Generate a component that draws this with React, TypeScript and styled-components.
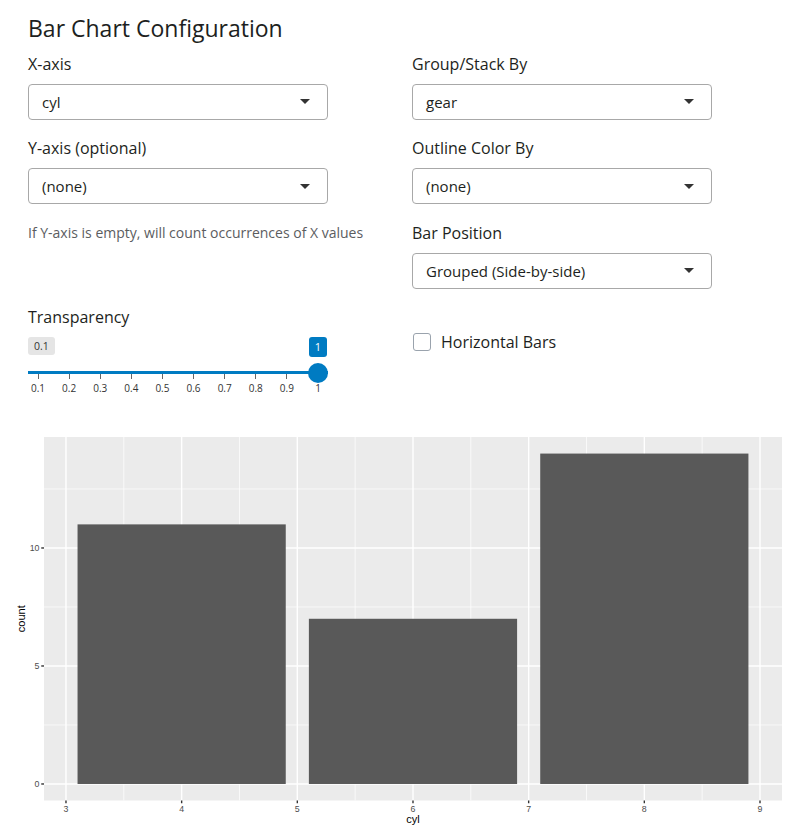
import React from "react";
import styled, { createGlobalStyle } from "styled-components";

const GlobalStyle = createGlobalStyle`
  html, body {
    margin: 0;
    padding: 0;
    background: #ffffff;
    overflow: hidden;
  }
  body {
    font-family: "Open Sans", "DejaVu Sans", sans-serif;
    color: #1d1f21;
  }
  * { box-sizing: border-box; }
`;

const Page = styled.div`
  width: 800px;
  display: flex;
  flex-direction: column;
`;

const ConfigSection = styled.section`
  padding: 15px 28px 0;
`;

const Title = styled.h3`
  margin: 0 0 9px;
  font-size: 23px;
  font-weight: 400;
  line-height: 1.2;
  color: #1d1f21;
`;

const ConfigGrid = styled.div`
  display: grid;
  grid-template-columns: 360px 360px;
  column-gap: 24px;
`;

const Column = styled.div`
  display: flex;
  flex-direction: column;
`;

const FormGroup = styled.div<{ $padTop?: number }>`
  display: flex;
  flex-direction: column;
  margin-bottom: 16.5px;
  padding-top: ${(p) => p.$padTop ?? 0}px;
`;

const Label = styled.label`
  font-size: 16px;
  line-height: 24px;
  margin-bottom: 8px;
  color: #1d1f21;
`;

const SelectBox = styled.div`
  width: 300px;
  height: 36px;
  display: flex;
  align-items: center;
  justify-content: space-between;
  padding: 0 17px 0 13px;
  border: 1px solid #a8a8a8;
  border-radius: 4px;
  background: #ffffff;
  font-size: 15px;
  color: #1d1f21;
`;

const Caret = styled.span`
  width: 0;
  height: 0;
  border-top: 5px solid #333333;
  border-left: 5px solid transparent;
  border-right: 5px solid transparent;
`;

const HelpText = styled.div`
  margin-top: 1.5px;
  font-size: 14px;
  line-height: 21px;
  color: #5b5d5f;
`;

const SliderBox = styled.div`
  width: 300px;
  display: flex;
  flex-direction: column;
`;

const SliderLabels = styled.div`
  height: 24px;
  display: flex;
  align-items: flex-start;
  justify-content: space-between;
  padding-right: 1px;
`;

const MinPill = styled.span`
  height: 18px;
  padding: 0 6px;
  border-radius: 3px;
  background: #e5e5e5;
  color: #333333;
  font-size: 10.5px;
  line-height: 18px;
`;

const ValueBadge = styled.span`
  width: 18px;
  height: 20px;
  border-radius: 3px;
  background: #007bc2;
  color: #ffffff;
  font-size: 11px;
  line-height: 20px;
  text-align: center;
`;

const Track = styled.div`
  position: relative;
  margin-top: 10px;
  height: 3px;
  background: #007bc2;
`;

const Thumb = styled.span`
  position: absolute;
  right: 0;
  top: -8.5px;
  width: 20px;
  height: 20px;
  border-radius: 50%;
  background: #007bc2;
`;

const Scale = styled.div`
  display: grid;
  grid-template-columns: repeat(10, 31.11px);
  margin-left: -5.56px;
`;

const TickCol = styled.div`
  display: flex;
  flex-direction: column;
  align-items: center;
`;

const TickMark = styled.span`
  width: 1px;
  height: 5px;
  background: #666666;
`;

const TickLabel = styled.span`
  margin-top: 3px;
  font-size: 10px;
  line-height: 12px;
  color: #333333;
`;

const CheckRow = styled.label`
  display: flex;
  align-items: center;
  gap: 10px;
  height: 24px;
  padding-left: 1px;
  font-size: 16px;
  color: #1d1f21;
`;

const CheckBox = styled.span`
  width: 18px;
  height: 18px;
  border: 1px solid #9aa3ad;
  border-radius: 3px;
  background: #ffffff;
`;

const PlotArea = styled.div`
  margin-top: 20px;
  padding: 0 12px;
  height: 400px;
`;

const Select = ({ value }: { value: string }) => (
  <SelectBox>
    <span>{value}</span>
    <Caret />
  </SelectBox>
);

const Field = ({ label, value }: { label: string; value: string }) => (
  <FormGroup>
    <Label>{label}</Label>
    <Select value={value} />
  </FormGroup>
);

const ticks = ["0.1", "0.2", "0.3", "0.4", "0.5", "0.6", "0.7", "0.8", "0.9", "1"];

const TransparencySlider = () => (
  <FormGroup>
    <Label>Transparency</Label>
    <SliderBox>
      <SliderLabels>
        <MinPill>0.1</MinPill>
        <ValueBadge>1</ValueBadge>
      </SliderLabels>
      <Track>
        <Thumb />
      </Track>
      <Scale>
        {ticks.map((t) => (
          <TickCol key={t}>
            <TickMark />
            <TickLabel>{t}</TickLabel>
          </TickCol>
        ))}
      </Scale>
    </SliderBox>
  </FormGroup>
);

const xs = (v: number) => 44 + (v - 2.81) * 115.67;
const ys = (v: number) => 800.5 - (v + 0.7) * 23.6;

const bars = [
  { x: 4, n: 11 },
  { x: 6, n: 7 },
  { x: 8, n: 14 },
];

const BarChart = () => {
  const majorX = [3, 4, 5, 6, 7, 8, 9];
  const minorX = [3.5, 4.5, 5.5, 6.5, 7.5, 8.5];
  const majorY = [0, 5, 10];
  const minorY = [2.5, 7.5, 12.5];
  const axisFont = "'Liberation Sans', Arial, sans-serif";
  return (
    <svg width="776" height="400" viewBox="12 431 776 400" style={{ display: "block" }}>
      <rect x="44" y="437" width="738" height="363.5" fill="#EBEBEB" />
      {minorY.map((v) => (
        <line key={"my" + v} x1="44" x2="782" y1={ys(v)} y2={ys(v)} stroke="#fff" strokeWidth="0.7" />
      ))}
      {minorX.map((v) => (
        <line key={"mx" + v} x1={xs(v)} x2={xs(v)} y1="437" y2="800.5" stroke="#fff" strokeWidth="0.7" />
      ))}
      {majorY.map((v) => (
        <line key={"Y" + v} x1="44" x2="782" y1={ys(v)} y2={ys(v)} stroke="#fff" strokeWidth="1.4" />
      ))}
      {majorX.map((v) => (
        <line key={"X" + v} x1={xs(v)} x2={xs(v)} y1="437" y2="800.5" stroke="#fff" strokeWidth="1.4" />
      ))}
      {bars.map((b) => (
        <rect
          key={b.x}
          x={xs(b.x - 0.9)}
          y={ys(b.n)}
          width={xs(b.x + 0.9) - xs(b.x - 0.9)}
          height={ys(0) - ys(b.n)}
          fill="#595959"
        />
      ))}
      {majorY.map((v) => (
        <g key={"ty" + v}>
          <line x1="41.25" x2="44" y1={ys(v)} y2={ys(v)} stroke="#333" strokeWidth="1.4" />
          <text x="39.5" y={ys(v) + 3.2} textAnchor="end" fontSize="8.8" fill="#4d4d4d" fontFamily={axisFont}>
            {v}
          </text>
        </g>
      ))}
      {majorX.map((v) => (
        <g key={"tx" + v}>
          <line x1={xs(v)} x2={xs(v)} y1="800.5" y2="803.25" stroke="#333" strokeWidth="1.4" />
          <text x={xs(v)} y="812" textAnchor="middle" fontSize="8.8" fill="#4d4d4d" fontFamily={axisFont}>
            {v}
          </text>
        </g>
      ))}
      <text x="413" y="823" textAnchor="middle" fontSize="11" fill="#000" fontFamily={axisFont}>
        cyl
      </text>
      <text
        x="25.5"
        y="618.7"
        textAnchor="middle"
        fontSize="11"
        fill="#000"
        fontFamily={axisFont}
        transform="rotate(-90 25.5 618.7)"
      >
        count
      </text>
    </svg>
  );
};

export default function App() {
  return (
    <Page>
      <GlobalStyle />
      <ConfigSection>
        <Title>Bar Chart Configuration</Title>
        <ConfigGrid>
          <Column>
            <Field label="X-axis" value="cyl" />
            <Field label="Y-axis (optional)" value="(none)" />
            <HelpText>If Y-axis is empty, will count occurrences of X values</HelpText>
          </Column>
          <Column>
            <Field label="Group/Stack By" value="gear" />
            <Field label="Outline Color By" value="(none)" />
            <Field label="Bar Position" value="Grouped (Side-by-side)" />
          </Column>
          <Column>
            <TransparencySlider />
          </Column>
          <Column>
            <FormGroup $padTop={25}>
              <CheckRow>
                <CheckBox />
                Horizontal Bars
              </CheckRow>
            </FormGroup>
          </Column>
        </ConfigGrid>
      </ConfigSection>
      <PlotArea>
        <BarChart />
      </PlotArea>
    </Page>
  );
}
